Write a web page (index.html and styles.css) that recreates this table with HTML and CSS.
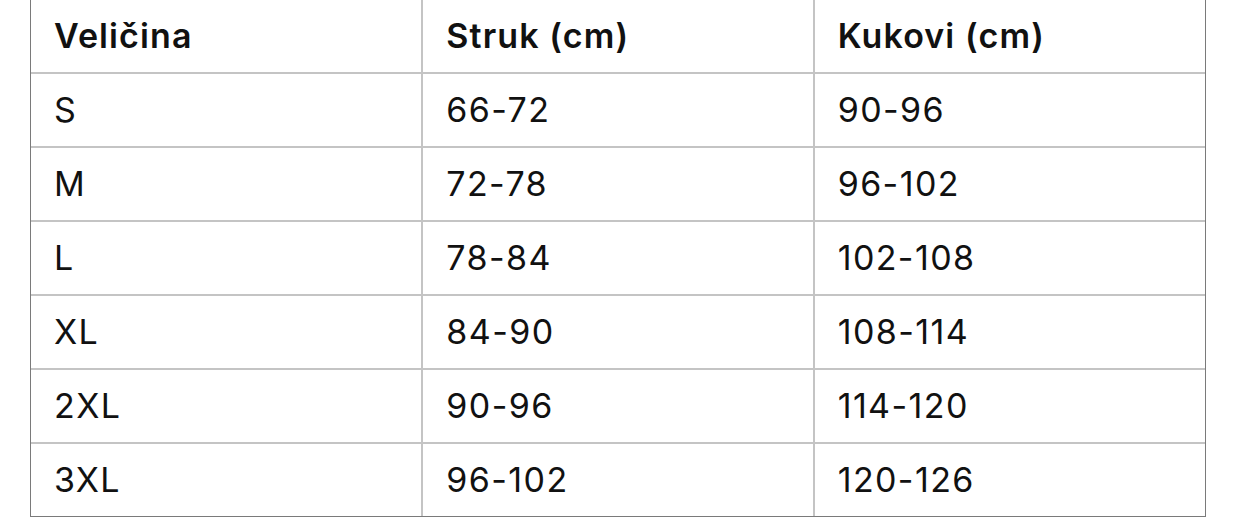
FILE: index.html
```html
<!DOCTYPE html>
<html lang="hr">
<head>
<meta charset="utf-8">
<title>Tablica veličina</title>
<link rel="stylesheet" href="styles.css">
</head>
<body>
<div class="size-table-wrap">
  <table class="size-table">
    <thead>
      <tr><th>Veličina</th><th>Struk (cm)</th><th>Kukovi (cm)</th></tr>
    </thead>
    <tbody>
      <tr><td>S</td><td>66-72</td><td>90-96</td></tr>
      <tr><td>M</td><td>72-78</td><td>96-102</td></tr>
      <tr><td>L</td><td>78-84</td><td>102-108</td></tr>
      <tr><td>XL</td><td>84-90</td><td>108-114</td></tr>
      <tr><td>2XL</td><td>90-96</td><td>114-120</td></tr>
      <tr><td>3XL</td><td>96-102</td><td>120-126</td></tr>
    </tbody>
  </table>
</div>
</body>
</html>
```
FILE: styles.css
```css
html, body {
  margin: 0;
  padding: 0;
  background: #ffffff;
}

body {
  font-family: Inter, "Noto Sans", "Liberation Sans", sans-serif;
  color: #111111;
}

.size-table-wrap {
  width: 1174px;
  margin: -1px 0 0 30px;
  border: 1px solid #7a7a7a;
}

.size-table {
  width: 100%;
  border-collapse: collapse;
  table-layout: fixed;
}

.size-table th,
.size-table td {
  height: 72px;
  padding: 0 0 0 23px;
  text-align: left;
  vertical-align: middle;
  font-size: 34px;
  line-height: 1;
}

.size-table th {
  font-weight: 600;
  letter-spacing: 1.1px;
}

.size-table td {
  font-weight: 400;
  letter-spacing: 1.4px;
}

.size-table th + th,
.size-table td + td {
  border-left: 2px solid #c4c4c4;
}

.size-table tbody tr td {
  border-top: 2px solid #c4c4c4;
}
```
